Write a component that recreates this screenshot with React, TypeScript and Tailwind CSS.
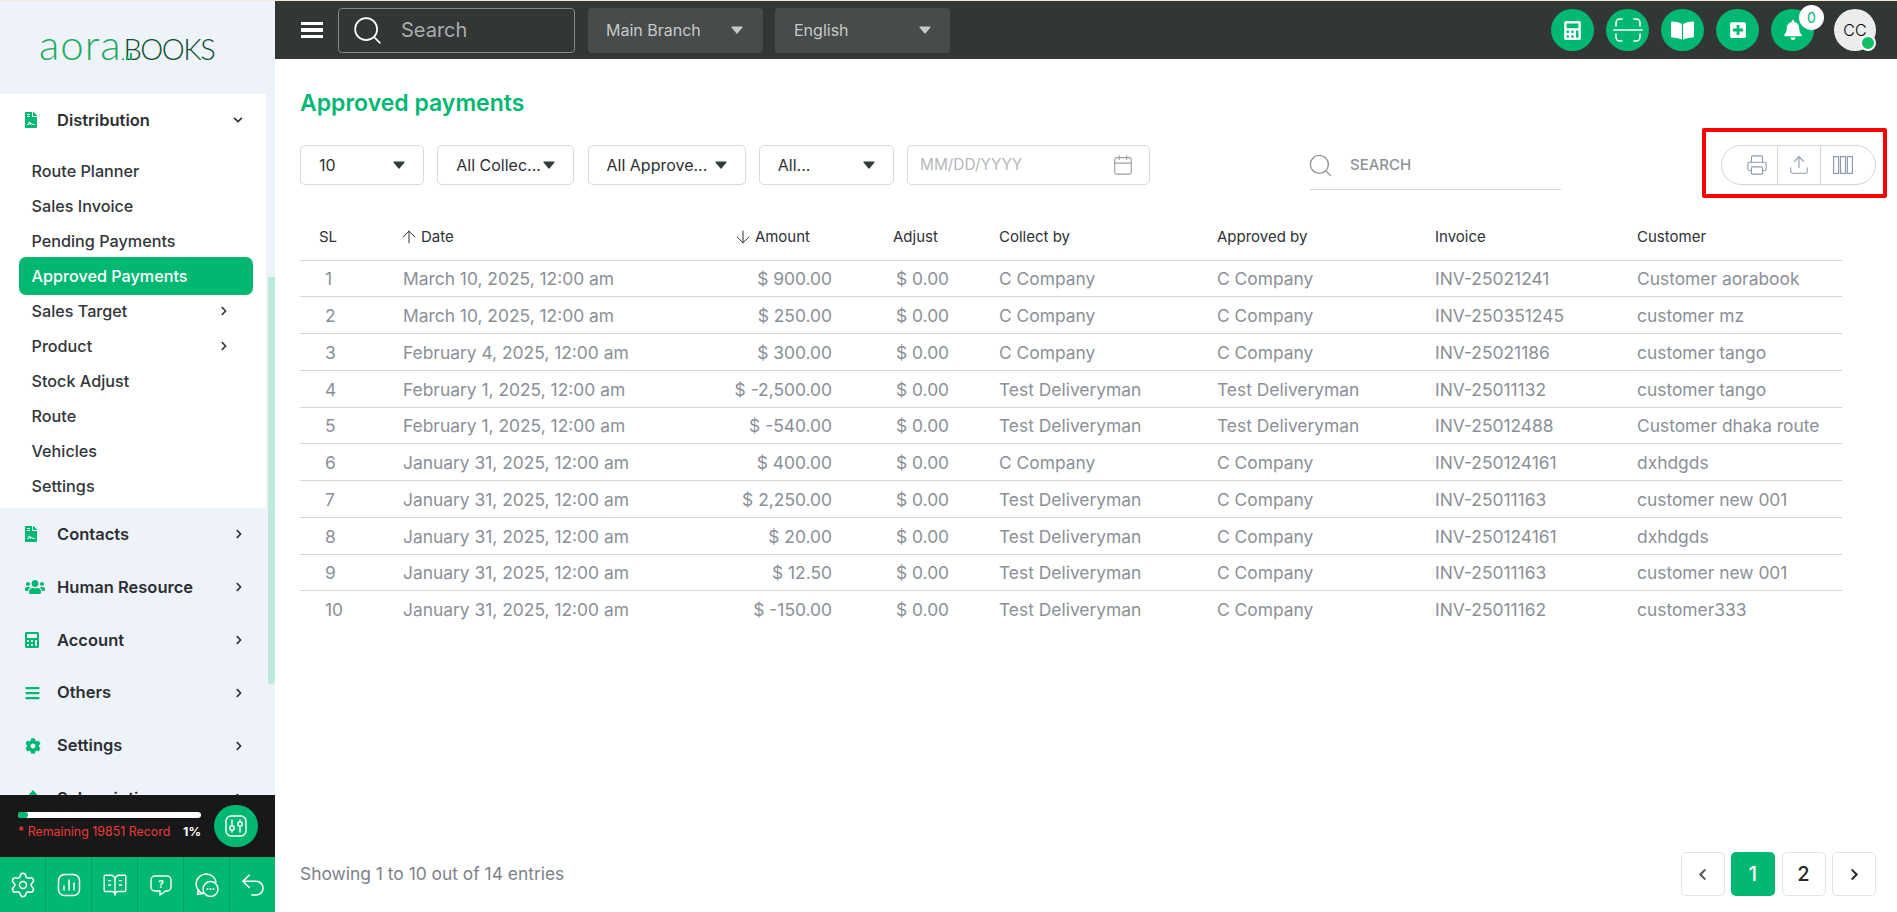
import React from "react";
import { ArrowDown, ArrowUp, BookOpenText, Calendar, Printer, Search, Settings, Undo2, Upload } from "lucide-react";
import {
  FaBell,
  FaBookOpen,
  FaBars,
  FaCalculator,
  FaChevronDown,
  FaChevronLeft,
  FaChevronRight,
  FaCog,
  FaFileContract,
  FaPlusSquare,
  FaUsers,
} from "react-icons/fa";

const subLinks = [
  { name: "Route Planner" },
  { name: "Sales Invoice" },
  { name: "Pending Payments" },
  { name: "Approved Payments", active: true },
  { name: "Sales Target", more: true },
  { name: "Product", more: true },
  { name: "Stock Adjust" },
  { name: "Route" },
  { name: "Vehicles" },
  { name: "Settings" },
];

function Diamond({ className }: { className?: string }) {
  return (
    <svg viewBox="0 0 16 16" className={className} fill="currentColor">
      <path d="M8 0l7 8-7 8-7-8z" />
    </svg>
  );
}

const mainLinks = [
  { name: "Contacts", icon: FaFileContract, size: "w-[12px] h-4" },
  { name: "Human Resource", icon: FaUsers, size: "w-[20px] h-4" },
  { name: "Account", icon: FaCalculator, size: "w-[14px] h-4" },
  { name: "Others", icon: FaBars, size: "w-[15px] h-4" },
  { name: "Settings", icon: FaCog, size: "w-4 h-4" },
  { name: "Subscription", icon: Diamond, size: "w-4 h-4" },
];

const rows = [
  ["1", "March 10, 2025, 12:00 am", "$ 900.00", "C Company", "C Company", "INV-25021241", "Customer aorabook"],
  ["2", "March 10, 2025, 12:00 am", "$ 250.00", "C Company", "C Company", "INV-250351245", "customer mz"],
  ["3", "February 4, 2025, 12:00 am", "$ 300.00", "C Company", "C Company", "INV-25021186", "customer tango"],
  ["4", "February 1, 2025, 12:00 am", "$ -2,500.00", "Test Deliveryman", "Test Deliveryman", "INV-25011132", "customer tango"],
  ["5", "February 1, 2025, 12:00 am", "$ -540.00", "Test Deliveryman", "Test Deliveryman", "INV-25012488", "Customer dhaka route"],
  ["6", "January 31, 2025, 12:00 am", "$ 400.00", "C Company", "C Company", "INV-250124161", "dxhdgds"],
  ["7", "January 31, 2025, 12:00 am", "$ 2,250.00", "Test Deliveryman", "C Company", "INV-25011163", "customer new 001"],
  ["8", "January 31, 2025, 12:00 am", "$ 20.00", "Test Deliveryman", "C Company", "INV-250124161", "dxhdgds"],
  ["9", "January 31, 2025, 12:00 am", "$ 12.50", "Test Deliveryman", "C Company", "INV-25011163", "customer new 001"],
  ["10", "January 31, 2025, 12:00 am", "$ -150.00", "Test Deliveryman", "C Company", "INV-25011162", "customer333"],
];

function Caret({ color = "#2c3e3b" }: { color?: string }) {
  return (
    <svg width="12" height="8" viewBox="0 0 12 8" className="shrink-0">
      <path d="M1 1h10L6 7z" fill={color} stroke={color} strokeWidth="1.2" strokeLinejoin="round" />
    </svg>
  );
}

function FilterSelect({ label, width }: { label: string; width: string }) {
  return (
    <div className={`${width} h-10 px-[18px] flex items-center justify-between border border-[#d9d9e6] rounded-[5px] text-[#2e3133] text-base`}>
      <span className="whitespace-nowrap">{label}</span>
      <Caret />
    </div>
  );
}

function CircleButton({ children }: { children: React.ReactNode }) {
  return <div className="w-[43px] h-[42px] rounded-full bg-[#00b871] text-white flex items-center justify-center">{children}</div>;
}

function FooterCell({ children, last }: { children: React.ReactNode; last?: boolean }) {
  return <div className={`flex-1 h-full flex items-center justify-center ${last ? "" : "border-r border-[#069e63]"}`}>{children}</div>;
}

function Sidebar() {
  return (
    <aside className="w-[275px] shrink-0 h-full flex flex-col bg-[#eef3f9]">
      {/* logo */}
      <div className="h-[93px] shrink-0 flex items-start pl-[39px] pt-[18px] overflow-hidden">
        <div className="flex items-baseline whitespace-nowrap" style={{ fontFamily: "Lato, sans-serif" }}>
          <span className="text-[42px] leading-[50px] font-light tracking-[1px] text-[#1faa60]">aora</span>
          <svg width="12" height="9" viewBox="0 0 12 9" className="-mr-[9px] -ml-[1px] relative">
            <path d="M1 9V7.500h2V9zM5 9V5h2v4zM9 9V2h2v7z" fill="#1faa60" />
          </svg>
          <span className="text-[29px] leading-[50px] font-light tracking-[-1.5px] text-[#0a4f2e]">BOOKS</span>
        </div>
      </div>

      <div className="flex-1 min-h-0 flex">
        <div className="w-[266px] shrink-0 overflow-hidden">
          {/* open group */}
          <div className="bg-white pb-[4.500px]">
            <div className="h-[52px] pl-[25px] pr-[23px] flex items-center text-[#2c2f33] font-semibold text-[16.500px]">
              <FaFileContract className="text-[#00b871] w-[12px] h-4" />
              <span className="ml-[20px]">Distribution</span>
              <FaChevronDown className="ml-auto w-[10px] h-[10px]" />
            </div>
            <div className="pt-[7.500px]">
              {subLinks.map((link) => (
                <div
                  key={link.name}
                  className={
                    link.active
                      ? "h-[38px] -my-[1.5px] relative ml-[19px] mr-[13px] pl-[12.500px] flex items-center rounded-[7px] bg-[#00b871] text-white text-[16.200px] font-medium"
                      : "h-[35px] pl-[31.500px] pr-[37px] flex items-center text-[#33363a] text-[16.200px] font-medium"
                  }
                >
                  {link.name}
                  {link.more && <FaChevronRight className="ml-auto w-[10px] h-[10px]" />}
                </div>
              ))}
            </div>
          </div>

          {mainLinks.map((link) => {
            const Icon = link.icon;
            return (
              <div key={link.name} className="h-[52.800px] pl-[25px] pr-[22px] flex items-center text-[#2c2f33] font-semibold text-[16.500px]">
                <span className="w-[32px] shrink-0 flex items-center">
                  <Icon className={`text-[#00b871] ${link.size}`} />
                </span>
                <span>{link.name}</span>
                <FaChevronRight className="ml-auto w-[10px] h-[10px]" />
              </div>
            );
          })}
        </div>
        <div className="w-[7px] ml-[2px]">
          <div className="mt-[183px] h-[407px] rounded-b-[4px] bg-[#bde8da]" />
        </div>
      </div>

      {/* records left */}
      <div className="h-[62px] shrink-0 bg-[#171818] pl-[18px] pr-[17px] flex items-center justify-between">
        <div className="w-[183px] -mt-[1px]">
          <div className="h-[6px] rounded-full bg-white">
            <div className="h-full w-[10px] rounded-full bg-[#00b871]" />
          </div>
          <div className="mt-[6px] flex justify-between text-[12.400px] leading-[16px] whitespace-nowrap">
            <span className="text-[#ef3a3a]">* Remaining 19851 Record</span>
            <span className="text-white font-bold">1%</span>
          </div>
        </div>
        <div className="w-11 h-[42px] rounded-full bg-[#00b871] flex items-center justify-center">
          <svg width="22" height="22" viewBox="0 0 22 22" fill="none" stroke="white" strokeWidth="1.4" strokeLinecap="round">
            <rect x="1" y="1" width="20" height="20" rx="5" />
            <path d="M7 5v5M7 16v1M15 5v1M15 12v5" />
            <circle cx="7" cy="13" r="2.2" />
            <circle cx="15" cy="9" r="2.2" />
          </svg>
        </div>
      </div>

      {/* quick links */}
      <div className="h-[55px] shrink-0 bg-[#00b871] text-white flex items-center">
        <FooterCell><Settings size={28} strokeWidth={1.3} /></FooterCell>
        <FooterCell>
          <svg width="24" height="24" viewBox="0 0 24 24" fill="none" stroke="white" strokeWidth="1.5" strokeLinecap="round">
            <rect x="1.5" y="1.5" width="21" height="21" rx="6" />
            <path d="M7 17v-4M12 17V7M17 17v-7" />
          </svg>
        </FooterCell>
        <FooterCell><BookOpenText size={26} strokeWidth={1.2} /></FooterCell>
        <FooterCell>
          <svg width="24" height="24" viewBox="0 0 24 24" fill="none" stroke="white" strokeWidth="1.4" strokeLinejoin="round">
            <path d="M6 3h12a4 4 0 0 1 4 4v7a4 4 0 0 1-4 4h-1.500l-5.500 4v-4H6a4 4 0 0 1-4-4V7a4 4 0 0 1 4-4z" />
            <text x="12" y="14.500" textAnchor="middle" fontSize="10" fontWeight="700" fill="white" stroke="none" fontFamily="Inter, sans-serif">?</text>
          </svg>
        </FooterCell>
        <FooterCell>
          <svg width="24" height="24" viewBox="0 0 24 24" fill="none" stroke="white" strokeWidth="1.4" strokeLinecap="round">
            <path d="M8 20.500A10 10 0 1 1 21 9" />
            <path d="M8 20.500L2.500 21.500 3.500 16.500" />
            <circle cx="15.500" cy="16" r="7.500" fill="#00b871" />
            <path d="M12.500 16h.01M15.500 16h.01M18.500 16h.01" strokeWidth="2" />
          </svg>
        </FooterCell>
        <FooterCell last><Undo2 size={30} strokeWidth={1.3} /></FooterCell>
      </div>
    </aside>
  );
}

function Topbar() {
  return (
    <header className="h-[58px] shrink-0 bg-[#323635] pl-[26px] pr-[21px] flex items-center">
      <div className="w-[22px] flex flex-col gap-[3px] shrink-0">
        <div className="h-[3.500px] bg-white" />
        <div className="h-[3.500px] bg-white" />
        <div className="h-[3.500px] bg-white" />
      </div>
      <div className="ml-[15px] w-[237px] h-[45px] border border-[#7f8a86] rounded-[4px] flex items-center pl-[12px] text-[#a9adad]">
        <Search size={33} strokeWidth={1.2} className="text-white" />
        <span className="ml-[17px] text-xl">Search</span>
      </div>
      <div className="ml-[13px] w-[175px] h-[45px] bg-[#474b4a] rounded-[4px] px-[18px] pr-[20px] flex items-center justify-between text-[#c5c9ca] text-base">
        Main Branch <Caret color="#c5c9ca" />
      </div>
      <div className="ml-[12px] w-[175px] h-[45px] bg-[#474b4a] rounded-[4px] px-[19px] flex items-center justify-between text-[#c5c9ca] text-base">
        English <Caret color="#c5c9ca" />
      </div>

      <div className="ml-auto flex items-center gap-3">
        <CircleButton><FaCalculator size={19} /></CircleButton>
        <CircleButton>
          <svg width="30" height="30" viewBox="0 0 30 30" fill="none" stroke="white" strokeWidth="1.6" strokeLinecap="round">
            <path d="M9 4H7a4 4 0 0 0-4 4v3M21 4h2a4 4 0 0 1 4 4v3M9 26H7a4 4 0 0 1-4-4v-3M21 26h2a4 4 0 0 0 4-4v-3M0.800 15h28.400" />
          </svg>
        </CircleButton>
        <CircleButton><FaBookOpen size={23} /></CircleButton>
        <CircleButton><FaPlusSquare size={18} /></CircleButton>
        <div className="relative">
          <CircleButton><FaBell size={20} /></CircleButton>
          <div className="absolute -top-1 -right-[10px] w-[25px] h-[25px] rounded-full bg-white text-[#00b871] text-sm flex items-center justify-center">0</div>
        </div>
        <div className="relative ml-2 w-[42px] h-[42px] rounded-full bg-[#ececec] text-black text-base font-light flex items-center justify-center">
          CC
          <div className="absolute right-0 bottom-0 w-4 h-4 rounded-full bg-[#10c060] border-2 border-white" />
        </div>
      </div>
    </header>
  );
}

function PageButton({ children, active }: { children: React.ReactNode; active?: boolean }) {
  return (
    <div className={`w-11 h-11 rounded-[5px] flex items-center justify-center text-xl font-medium ${active ? "bg-[#00b871] text-white" : "border border-[#e1e3e8] text-[#26282c]"}`}>
      {children}
    </div>
  );
}

export default function App() {
  return (
    <div className="h-screen w-full overflow-hidden flex flex-col bg-white" style={{ fontFamily: "Inter, sans-serif" }}>
      <div className="h-px shrink-0 bg-[#f2ead9]" />
      <div className="flex-1 min-h-0 flex">
        <Sidebar />
        <div className="flex-1 min-w-0 flex flex-col">
          <Topbar />
          <main className="flex-1 min-h-0 pl-[25px] pr-[21px] pt-[29px] pb-4 flex flex-col">
            <h1 className="h-[30px] leading-[30px] text-[23px] font-semibold text-[#00b871]">Approved payments</h1>

            <div className="mt-[27px] flex items-start">
              <div className="flex items-center gap-[13.250px]">
                <FilterSelect label="10" width="w-[124px]" />
                <FilterSelect label="All Collec..." width="w-[137px]" />
                <FilterSelect label="All Approve..." width="w-[158px]" />
                <FilterSelect label="All..." width="w-[135px]" />
                <div className="w-[243px] h-10 pl-[12px] pr-[15px] flex items-center justify-between border border-[#d9d9e6] rounded-[5px] text-[#b5b8bd] text-[15.400px]">
                  MM/DD/YYYY
                  <Calendar size={22} strokeWidth={1.2} className="text-[#9a9ea6]" />
                </div>
              </div>
              <div className="ml-[160px] w-[251px] h-[45px] pb-1 border-b border-[#d3d3e0] flex items-center text-[#8e9299] text-[15px] font-medium">
                <Search size={27} strokeWidth={1.2} className="-ml-[3px]" />
                <span className="ml-4">SEARCH</span>
              </div>
              <div className="relative ml-auto w-[155px] h-10 border border-[#d3d3e0] rounded-full flex items-center text-[#8f9bb3]">
                <div className="w-[56px] h-full border-r border-[#d3d3e0] flex items-center justify-end pr-[9px]"><Printer size={22} strokeWidth={1.2} /></div>
                <div className="w-[43px] h-full border-r border-[#d3d3e0] flex items-center justify-center"><Upload size={22} strokeWidth={1.2} /></div>
                <div className="flex-1 h-full flex items-center pl-[12px]">
                  <svg width="20" height="18" viewBox="0 0 20 18" fill="none" stroke="currentColor" strokeWidth="1.2">
                    <rect x="0.600" y="0.600" width="5" height="16.800" />
                    <rect x="7.500" y="0.600" width="5" height="16.800" />
                    <rect x="14.400" y="0.600" width="5" height="16.800" />
                  </svg>
                </div>
                <div className="absolute -left-[20px] -right-[12px] -top-[18px] -bottom-[14px] border-4 border-[#ff0000] rounded-[2px]" />
              </div>
            </div>

            <table className="mt-[24px] w-[1542px] table-fixed border-collapse">
              <colgroup>
                <col className="w-[103px]" />
                <col className="w-[317px]" />
                <col className="w-[173px]" />
                <col className="w-[106px]" />
                <col className="w-[218px]" />
                <col className="w-[218px]" />
                <col className="w-[202px]" />
                <col className="w-[205px]" />
              </colgroup>
              <thead>
                <tr className="h-[46px] border-b border-[#d5d5e1] text-[15px] text-[#2e3136] text-left">
                  <th className="pl-[19px] font-normal">SL</th>
                  <th className="font-normal"><span className="flex items-center gap-[2px] -ml-1"><ArrowUp size={20} strokeWidth={1.2} />Date</span></th>
                  <th className="font-normal"><span className="flex items-center justify-end gap-[2px] pr-[83px]"><ArrowDown size={20} strokeWidth={1.2} />Amount</span></th>
                  <th className="font-normal">Adjust</th>
                  <th className="font-normal">Collect by</th>
                  <th className="font-normal">Approved by</th>
                  <th className="font-normal">Invoice</th>
                  <th className="font-normal">Customer</th>
                </tr>
              </thead>
              <tbody>
                {rows.map((row, i) => (
                  <tr key={row[0]} className={`h-[36.750px] text-[17.400px] text-[#8b9098] ${i < rows.length - 1 ? "border-b border-[#d5d5e1]" : ""}`}>
                    <td className="pl-[25px] pt-[2px]">{row[0]}</td>
                    <td className="pt-[2px] whitespace-nowrap">{row[1]}</td>
                    <td className="pt-[2px] text-right pr-[61px] whitespace-nowrap">{row[2]}</td>
                    <td className="pt-[2px] pl-[3px] whitespace-nowrap">$ 0.00</td>
                    <td className="pt-[2px] whitespace-nowrap">{row[3]}</td>
                    <td className="pt-[2px] whitespace-nowrap">{row[4]}</td>
                    <td className="pt-[2px] whitespace-nowrap">{row[5]}</td>
                    <td className="pt-[2px] whitespace-nowrap">{row[6]}</td>
                  </tr>
                ))}
              </tbody>
            </table>

            <div className="mt-auto flex items-center justify-between">
              <span className="text-[17.400px] text-[#7d828a]">Showing 1 to 10 out of 14 entries</span>
              <div className="flex items-center gap-[6.500px]">
                <PageButton><FaChevronLeft size={13} className="text-[#555]" /></PageButton>
                <PageButton active>1</PageButton>
                <PageButton>2</PageButton>
                <PageButton><FaChevronRight size={13} /></PageButton>
              </div>
            </div>
          </main>
        </div>
      </div>
    </div>
  );
}
